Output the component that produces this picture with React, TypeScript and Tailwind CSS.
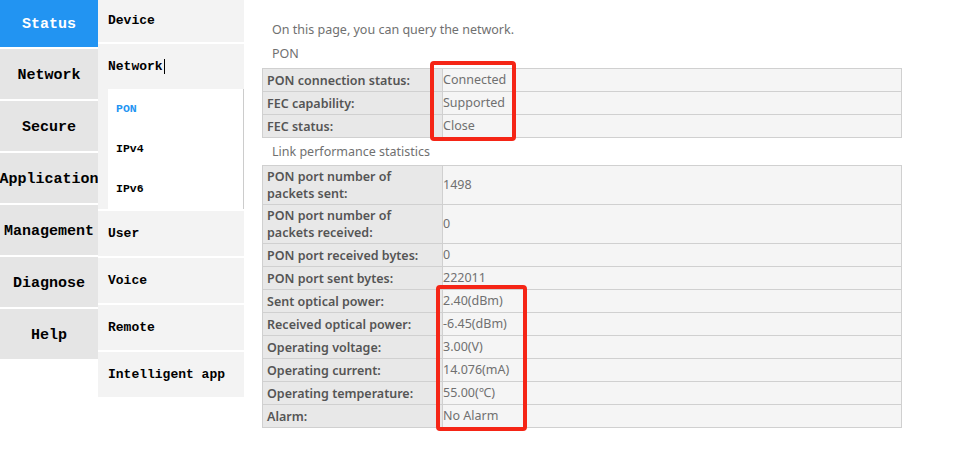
import React from "react"

const mainMenu = ["Status", "Network", "Secure", "Application", "Management", "Diagnose", "Help"]

const ponRows = [
  { label: "PON connection status:", value: "Connected" },
  { label: "FEC capability:", value: "Supported" },
  { label: "FEC status:", value: "Close" },
]

const linkRows = [
  { label: "PON port number of packets sent:", value: "1498", tall: true },
  { label: "PON port number of packets received:", value: "0", tall: true },
  { label: "PON port received bytes:", value: "0" },
  { label: "PON port sent bytes:", value: "222011" },
  { label: "Sent optical power:", value: "2.40(dBm)" },
  { label: "Received optical power:", value: "-6.45(dBm)" },
  { label: "Operating voltage:", value: "3.00(V)" },
  { label: "Operating current:", value: "14.076(mA)" },
  { label: "Operating temperature:", value: "55.00(\u2103)" },
  { label: "Alarm:", value: "No Alarm" },
]

type Row = { label: string; value: string; tall?: boolean }

function InfoTable({ rows }: { rows: Row[] }) {
  return (
    <table className="w-[640px] border-collapse border border-[#d0d0d0] text-[12.5px]">
      <tbody>
        {rows.map((r) => (
          <tr key={r.label}>
            <td
              className={`w-[180px] border border-[#d0d0d0] bg-[#e8e8e8] pl-[4px] pr-2 font-semibold text-[#555] leading-[17px] ${
                r.tall ? "h-[39px]" : "h-[23px]"
              }`}
            >
              {r.label}
            </td>
            <td className="border border-[#d0d0d0] bg-[#f5f5f5] pl-0 text-[#707070]">{r.value}</td>
          </tr>
        ))}
      </tbody>
    </table>
  )
}

function SubItem({ text, tall }: { text: string; tall?: boolean }) {
  return (
    <div className={`flex items-center bg-[#f3f3f3] pl-[10px] ${tall ? "h-[42px]" : "h-[45px]"}`}>
      {text}
    </div>
  )
}

export default function App() {
  return (
    <div className="flex h-[471px] w-[956px] bg-white">
      {/* first level menu */}
      <div className="flex w-[98px] flex-col gap-[2px] font-['Liberation_Mono',monospace] text-[15px] font-bold">
        {mainMenu.map((m, i) => (
          <div
            key={m}
            className={`flex items-center justify-center whitespace-nowrap pt-[4px] ${
              i === 0 ? "h-[47px] bg-[#2294f2] text-white" : "h-[50px] bg-[#e5e5e5] text-black"
            }`}
          >
            {m}
          </div>
        ))}
      </div>

      {/* second level menu */}
      <div className="flex w-[146px] flex-col gap-[2px] font-['Liberation_Mono',monospace] text-[13px] font-bold text-black">
        <SubItem text="Device" tall />
        <div className="bg-[#f3f3f3]">
          <div className="flex h-[45px] items-center pl-[10px]">
            Network<span className="ml-[1px] inline-block h-[15px] w-[1px] bg-black" />
          </div>
          <div className="ml-[10px] border-r border-[#cccccc] bg-white text-[11.5px]">
            <div className="flex h-[40px] items-center pl-[8px] text-[#2294f2]">PON</div>
            <div className="flex h-[40px] items-center pl-[8px]">IPv4</div>
            <div className="flex h-[40px] items-center pl-[8px]">IPv6</div>
          </div>
        </div>
        <SubItem text="User" />
        <SubItem text="Voice" />
        <SubItem text="Remote" />
        <SubItem text="Intelligent app" />
      </div>

      {/* content */}
      <div className="relative flex-1 pl-[18px] pt-[20px] font-['Noto_Sans',sans-serif] text-[12.5px] text-[#707070]">
        <p className="pl-[10px] leading-[20px]">On this page, you can query the network.</p>
        <p className="mt-[4px] pl-[10px] leading-[20px]">PON</p>
        <div className="mt-[4px]">
          <InfoTable rows={ponRows} />
        </div>
        <p className="mt-[4px] pl-[10px] leading-[20px]">Link performance statistics</p>
        <div className="mt-[3px]">
          <InfoTable rows={linkRows} />
        </div>

        {/* red annotation boxes */}
        <div className="absolute left-[186px] top-[61px] h-[80px] w-[86px] rounded-[4px] border-[4px] border-[#f52516]" />
        <div className="absolute left-[192px] top-[285px] h-[146px] w-[91px] rounded-[4px] border-[4px] border-[#f52516]" />
      </div>
    </div>
  )
}
